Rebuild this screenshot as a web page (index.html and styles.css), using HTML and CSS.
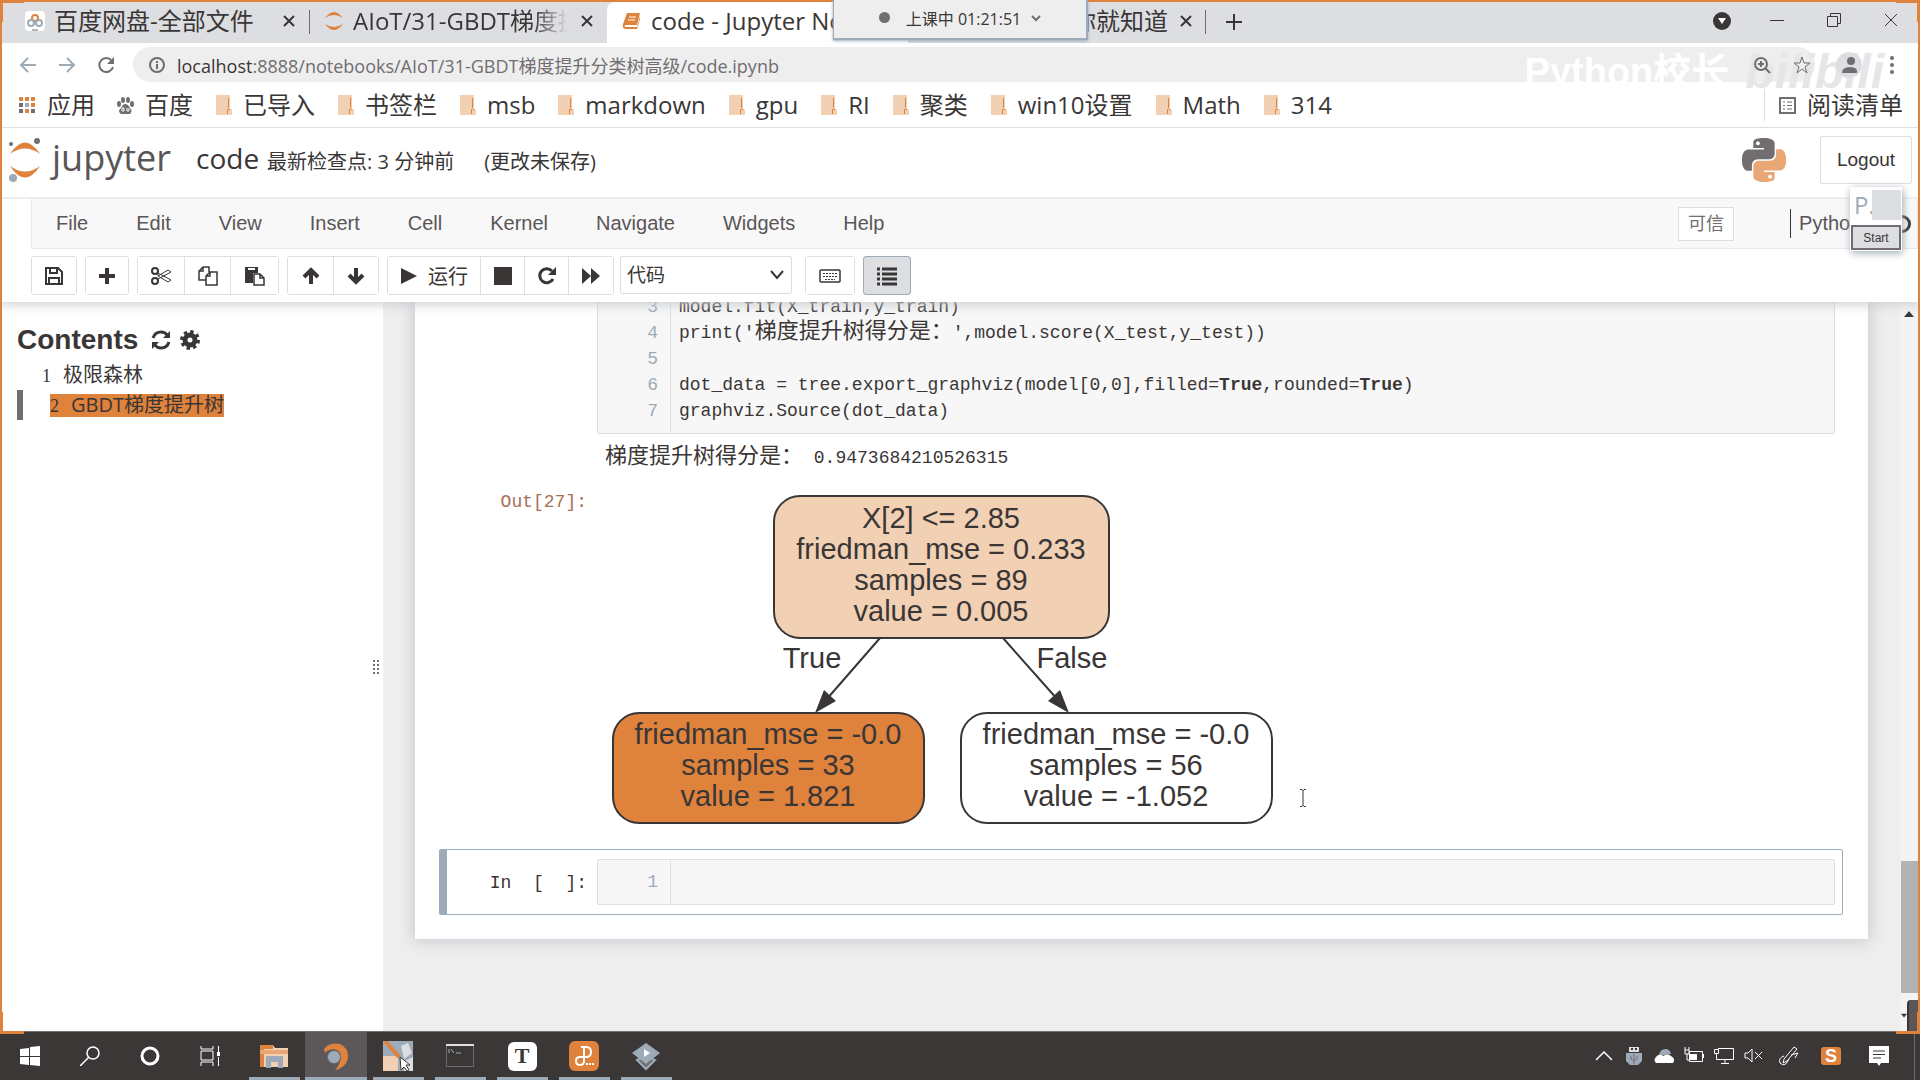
FILE: index.html
```html
<!DOCTYPE html>
<html lang="zh-CN">
<head>
<meta charset="utf-8">
<title>code - Jupyter Notebook</title>
<link rel="stylesheet" href="styles.css">
</head>
<body>
<svg class="defs" aria-hidden="true">
  <symbol id="folder" viewBox="0 0 17 20"><path d="M1 0h14v14l2 1v5H1z" fill="#f2d0b4"/><path d="M13.500 3v10M12.500 14v5M13.500 14.500h2" stroke="#de823c" fill="none"/></symbol>
  <symbol id="cross" viewBox="0 0 12 12"><path d="M1 1l10 10M11 1L1 11" stroke="#3a3636" stroke-width="2"/></symbol>
  <symbol id="jup" viewBox="0 0 20 20"><path d="M1 7Q10-5 19 7Q10 1 1 7zM1 13Q10 25 19 13Q10 19 1 13z" fill="#de823c"/></symbol>
</svg>

<div class="window">
  <header class="browser">
    <nav class="tabs" aria-label="标签页">
      <div class="tab">
        <svg class="i20" viewBox="0 0 20 20"><rect width="20" height="20" rx="4" fill="#fff"/><circle cx="10" cy="7" r="3" fill="none" stroke="#de823c" stroke-width="2"/><circle cx="6" cy="12" r="3" fill="none" stroke="#9dabb8" stroke-width="2"/><circle cx="14" cy="12" r="3" fill="none" stroke="#9dabb8" stroke-width="2"/><path d="M7 19h6" stroke="#716d71"/></svg>
        <span class="tab-title">百度网盘-全部文件</span>
        <button class="plain" aria-label="关闭"><svg class="i12"><use href="#cross"/></svg></button>
      </div>
      <div class="tab ruled">
        <svg class="i20"><use href="#jup"/></svg>
        <span class="tab-title fade">AIoT/31-GBDT梯度提升</span>
        <button class="plain" aria-label="关闭"><svg class="i12"><use href="#cross"/></svg></button>
      </div>
      <div class="tab active">
        <svg class="i20" viewBox="0 0 20 20"><path d="M5 2h13l-3 12H4q-2 0-1 2h12l3-11v3l-3 10H3q-3-1-2-5z" fill="#de823c"/><path d="M7 6h7M6 9h7" stroke="#fff"/></svg>
        <span class="tab-title">code - Jupyter Notebook</span>
      </div>
      <div class="tab last">
        <span class="i20"></span>
        <span class="tab-title">百度一下，你就知道</span>
        <button class="plain" aria-label="关闭"><svg class="i12"><use href="#cross"/></svg></button>
      </div>
      <button class="plain newtab" aria-label="新标签页"><svg class="i16" viewBox="0 0 16 16"><path d="M8 0v16M0 8h16" stroke="#3a3636" stroke-width="2"/></svg></button>
      <div class="winctl">
        <svg class="i20" viewBox="0 0 20 20"><circle cx="10" cy="11" r="9" fill="#3a3636"/><path d="M6 8h8l-4 6z" fill="#fff"/></svg>
        <button class="plain" aria-label="最小化"><svg class="i14" viewBox="0 0 14 14"><path d="M0 7.500h14" stroke="#3a3636"/></svg></button>
        <button class="plain" aria-label="还原"><svg class="i14" viewBox="0 0 14 14"><path d="M.5 3.500h10v10H.5zM3.500 3V.5h10v10H11" stroke="#3a3636" fill="none"/></svg></button>
        <button class="plain" aria-label="关闭窗口"><svg class="i14" viewBox="0 0 14 14"><path d="M1 1l12 12M13 1L1 13" stroke="#3a3636"/></svg></button>
      </div>
    </nav>

    <div class="address">
      <button class="plain" aria-label="后退"><svg class="i18" viewBox="0 0 18 18"><path d="M17 9H2M9 2L2 9l7 7" stroke="#9dabb8" stroke-width="2" fill="none"/></svg></button>
      <button class="plain" aria-label="前进"><svg class="i18" viewBox="0 0 18 18"><path d="M1 9h15M9 2l7 7-7 7" stroke="#9dabb8" stroke-width="2" fill="none"/></svg></button>
      <button class="plain" aria-label="刷新"><svg class="i18" viewBox="0 0 18 18"><path d="M15 5a7 7 0 1 0 1 6" stroke="#716d71" stroke-width="2" fill="none"/><path d="M17 1v7h-7z" fill="#716d71"/></svg></button>
      <div class="omnibox">
        <svg class="i18" viewBox="0 0 18 18"><circle cx="9" cy="9" r="7" stroke="#716d71" stroke-width="2" fill="none"/><path d="M9 8v5M9 5v2" stroke="#716d71" stroke-width="2"/></svg>
        <span class="url"><b>localhost</b>:8888/notebooks/AIoT/31-GBDT梯度提升分类树高级/code.ipynb</span>
        <svg class="i18" viewBox="0 0 18 18"><circle cx="8" cy="8" r="6" stroke="#716d71" stroke-width="2" fill="none"/><path d="M12 12l5 5M8 5v6M5 8h6" stroke="#716d71" stroke-width="2"/></svg>
        <svg class="i18 star" viewBox="0 0 18 18"><path d="M9 1l2 6h6l-5 4 2 6-5-4-5 4 2-6-5-4h6z" stroke="#716d71" fill="none"/></svg>
      </div>
      <svg class="i26" viewBox="0 0 26 26"><circle cx="13" cy="13" r="13" fill="#dddee2"/><circle cx="15" cy="9" r="4" fill="#716d71"/><path d="M6 21q0-6 8-6t7 6z" fill="#716d71"/></svg>
      <button class="plain kebab" aria-label="菜单"><svg class="i18" viewBox="0 0 18 18"><circle cx="9" cy="2" r="2" fill="#716d71"/><circle cx="9" cy="9" r="2" fill="#716d71"/><circle cx="9" cy="16" r="2" fill="#716d71"/></svg></button>
      <div class="watermark" aria-hidden="true"><span>Python校长</span><i>bilibili</i></div>
    </div>

    <nav class="bookmarks" aria-label="书签">
      <a href="#"><svg class="i17" viewBox="0 0 17 17"><path d="M0 0h4v4H0zM6 0h4v4H6zM12 0h4v4h-4zM12 6h4v4h-4zM6 12h4v4H6z" fill="#de823c"/><path d="M0 6h4v4H0zM0 12h4v4H0zM12 12h4v4h-4z" fill="#716d71"/><path d="M6 6h4v4H6z" fill="#9dabb8"/></svg>应用</a>
      <a href="#"><svg class="i17" viewBox="0 0 17 17"><g fill="#716d71"><ellipse cx="2" cy="7" rx="2" ry="3"/><ellipse cx="6" cy="3" rx="2" ry="3"/><ellipse cx="11" cy="3" rx="2" ry="3"/><ellipse cx="15" cy="7" rx="2" ry="3"/><path d="M8 7q3 0 5 4 3 3 0 6H4q-4-3 0-6 2-4 4-4z"/></g><path d="M7 11H5v3h2zM10 11v3h2v-3" stroke="#fff" fill="none"/></svg>百度</a>
      <a href="#"><svg class="i17 f"><use href="#folder"/></svg>已导入</a>
      <a href="#"><svg class="i17 f"><use href="#folder"/></svg>书签栏</a>
      <a href="#"><svg class="i17 f"><use href="#folder"/></svg>msb</a>
      <a href="#"><svg class="i17 f"><use href="#folder"/></svg>markdown</a>
      <a href="#"><svg class="i17 f"><use href="#folder"/></svg>gpu</a>
      <a href="#"><svg class="i17 f"><use href="#folder"/></svg>RI</a>
      <a href="#"><svg class="i17 f"><use href="#folder"/></svg>聚类</a>
      <a href="#"><svg class="i17 f"><use href="#folder"/></svg>win10设置</a>
      <a href="#"><svg class="i17 f"><use href="#folder"/></svg>Math</a>
      <a href="#"><svg class="i17 f"><use href="#folder"/></svg>314</a>
      <a href="#" class="reading"><svg class="i17" viewBox="0 0 17 17"><path d="M1 1h15v15H1z" fill="none" stroke="#716d71" stroke-width="2"/><path d="M4 5h2M8 5h5M4 8.500h2M8 8.500h5M4 12h2M8 12h5" stroke="#716d71"/></svg>阅读清单</a>
    </nav>
  </header>

  <section class="jhead">
    <a href="#" class="logo">
      <svg class="jlogo" viewBox="0 0 32 44"><path d="M1 16Q16-7 31 16Q16 5 1 16zM1 28Q16 51 31 28Q16 39 1 28z" fill="#de823c"/><circle cx="28" cy="3" r="3" fill="#716d71"/><circle cx="2" cy="6" r="2" fill="#716d71"/><circle cx="4" cy="40" r="4" fill="#9dabb8"/></svg>
      <span>jupyter</span>
    </a>
    <h1>code</h1>
    <span class="check">最新检查点: 3 分钟前</span>
    <span class="unsaved">(更改未保存)</span>
    <svg class="python" viewBox="0 0 24 24"><defs><path id="py" fill-rule="evenodd" d="M14.250.18l.9.2.73.26.59.3.45.32.34.34.25.34.16.33.1.3.04.26.02.2-.01.13V8.500l-.05.63-.13.55-.21.46-.26.38-.3.31-.33.25-.35.19-.35.14-.33.1-.3.07-.26.04-.21.02H8.770l-.69.05-.59.14-.5.22-.41.27-.33.32-.27.35-.2.36-.15.37-.1.35-.07.32-.04.27-.02.21v3.060H3.170l-.21-.03-.28-.07-.32-.12-.35-.18-.36-.26-.36-.36-.35-.46-.32-.59-.28-.73-.21-.88-.14-1.050-.05-1.230.06-1.220.16-1.040.24-.87.32-.71.36-.57.4-.44.42-.33.42-.24.4-.16.36-.1.32-.05.24-.01h.16l.06.01h8.160v-.83H6.180l-.01-2.750-.02-.37.05-.34.11-.31.17-.28.25-.26.31-.23.38-.2.44-.18.51-.15.58-.12.64-.1.71-.06.77-.04.84-.02 1.270.05zm-6.300 1.980l-.23.33-.08.41.08.41.23.34.33.22.41.09.41-.09.33-.22.23-.34.08-.41-.08-.41-.23-.33-.33-.22-.41-.09-.41.09z"/></defs><use href="#py" fill="#716d71"/><use href="#py" fill="#e8a775" transform="rotate(180 12 12)"/></svg>
    <button class="logout">Logout</button>
    <div class="startbox">
      <div class="starttop"><span>P.</span><span class="pad"></span></div>
      <button>Start</button>
    </div>
  </section>

  <nav class="menubar" aria-label="菜单栏">
    <a href="#">File</a><a href="#">Edit</a><a href="#">View</a><a href="#">Insert</a><a href="#">Cell</a><a href="#">Kernel</a><a href="#">Navigate</a><a href="#">Widgets</a><a href="#">Help</a>
    <span class="trusted">可信</span>
    <span class="kernel">Python 3 <span class="ring"></span></span>
  </nav>

  <div class="toolbar">
    <div class="group"><button class="w44" aria-label="保存"><svg class="i18" viewBox="0 0 18 18"><path d="M1 1h12l4 4v12H1zM5 1v5h7V1M4 17v-6h10v6" stroke="#3a3636" stroke-width="2" fill="none"/></svg></button></div>
    <div class="group"><button class="w42" aria-label="添加"><svg class="i16" viewBox="0 0 16 16"><path d="M8 0v16M0 8h16" stroke="#3a3636" stroke-width="4"/></svg></button></div>
    <div class="group">
      <button class="w46" aria-label="剪切"><svg class="i20" viewBox="0 0 20 20"><g fill="none" stroke="#3a3636"><circle cx="4" cy="5" r="3" stroke-width="2"/><circle cx="4" cy="15" r="3" stroke-width="2"/><path d="M7 7l13 7-3 2L7 10zM7 13l13-7-3-2-10 6"/></g></svg></button>
      <button class="w46" aria-label="复制"><svg class="i20" viewBox="0 0 20 20"><path d="M5 1h6v5M5 1L1 5v9h7M5 1v4H1M12 6h7v13H8v-9zM12 6v4H8" stroke="#3a3636" stroke-width="1.500" fill="none"/></svg></button>
      <button class="w48" aria-label="粘贴"><svg class="i20" viewBox="0 0 20 20"><path d="M0 1h13v6H8v10H0z" fill="#3a3636"/><path d="M3 3h7" stroke="#fff" stroke-width="2"/><path d="M9 8h6l4 4v7H9zM15 8v4h4" stroke="#3a3636" stroke-width="1.500" fill="#fff"/></svg></button>
    </div>
    <div class="group">
      <button class="w45" aria-label="上移"><svg class="i18" viewBox="0 0 18 18"><path d="M9 17V3M2 10l7-7 7 7" stroke="#3a3636" stroke-width="4" fill="none"/></svg></button>
      <button class="w45" aria-label="下移"><svg class="i18" viewBox="0 0 18 18"><path d="M9 1v14M2 8l7 7 7-7" stroke="#3a3636" stroke-width="4" fill="none"/></svg></button>
    </div>
    <div class="group">
      <button class="run"><svg class="i18" viewBox="0 0 18 18"><path d="M1 1l16 8-16 8z" fill="#3a3636"/></svg>运行</button>
      <button class="w44" aria-label="停止"><svg class="i18" viewBox="0 0 18 18"><path d="M0 0h18v18H0z" fill="#3a3636"/></svg></button>
      <button class="w44" aria-label="重启"><svg class="i18" viewBox="0 0 18 18"><path d="M14 4a7 7 0 1 0 1 8" stroke="#3a3636" stroke-width="3" fill="none"/><path d="M18 0v8h-8z" fill="#3a3636"/></svg></button>
      <button class="w45" aria-label="重启并运行"><svg class="i18" viewBox="0 0 18 18"><path d="M0 1l9 8-9 8zM9 1l9 8-9 8z" fill="#3a3636"/></svg></button>
    </div>
    <select class="celltype" aria-label="单元类型"><option>代码</option></select>
    <div class="group"><button class="w48" aria-label="键盘"><svg class="i22" viewBox="0 0 22 18"><rect x="1" y="3" width="20" height="12" rx="1" fill="none" stroke="#3a3636" stroke-width="1.500"/><path d="M4 6.500h15M4 9.500h15M6 12.500h10" stroke="#3a3636" stroke-dasharray="2 1"/></svg></button></div>
    <div class="group"><button class="w46 on" aria-label="目录"><svg class="i20" viewBox="0 0 20 20"><path d="M0 3h3M5 3h15M0 8h3M5 8h15M0 13h3M5 13h15M0 18h3M5 18h15" stroke="#3a3636" stroke-width="3"/></svg></button></div>
  </div>

  <main class="site">
    <aside class="toc">
      <h2>Contents
        <svg class="i20" viewBox="0 0 20 20"><path d="M2 8q2-6 8-6 4 0 6 3M18 12q-2 6-8 6-4 0-6-3" stroke="#3a3636" stroke-width="3" fill="none"/><path d="M19 1v7h-7zM1 19v-7h7z" fill="#3a3636"/></svg>
        <svg class="i20" viewBox="0 0 20 20"><circle cx="10" cy="10" r="5" fill="none" stroke="#3a3636" stroke-width="5"/><circle cx="10" cy="10" r="8" fill="none" stroke="#3a3636" stroke-width="4" stroke-dasharray="3.200 3.080"/></svg>
      </h2>
      <ul>
        <li><a href="#"><small>1</small>极限森林</a></li>
        <li class="cur"><a href="#"><small>2</small>GBDT梯度提升树</a></li>
      </ul>
      <span class="grip"></span>
    </aside>

    <div class="scroller">
      <div class="notebook">
        <div class="cell">
          <div class="prompt"></div>
          <div class="input code">
            <ol class="gutter"><li>3</li><li>4</li><li>5</li><li>6</li><li>7</li></ol>
<pre>model.fit(X_train,y_train)
print('<span class="zh">梯度提升树得分是：</span>',model.score(X_test,y_test))

dot_data = tree.export_graphviz(model[0,0],filled=<b>True</b>,rounded=<b>True</b>)
graphviz.Source(dot_data)</pre>
          </div>
        </div>
        <div class="cell">
          <div class="prompt"></div>
          <pre class="stdout"><span class="zh">梯度提升树得分是：</span> 0.9473684210526315</pre>
        </div>
        <div class="cell result">
          <div class="prompt out">Out[27]:</div>
          <svg class="tree" width="668" height="332" viewBox="610 494 668 332">
            <g stroke="#3a3636" stroke-width="2">
              <rect x="774" y="496" width="335" height="142" rx="26" fill="#f2d0b4"/>
              <rect x="613" y="713" width="311" height="110" rx="26" fill="#de823c"/>
              <rect x="961" y="713" width="311" height="110" rx="26" fill="#fff"/>
              <path d="M880 638L826 700M1003 638l55 62"/>
            </g>
            <path d="M815 713l9-23 12 11zM1069 713l-21-12 12-11z" fill="#3a3636"/>
            <g text-anchor="middle">
              <text x="941" y="528">X[2] &lt;= 2.85</text><text x="941" y="559">friedman_mse = 0.233</text><text x="941" y="590">samples = 89</text><text x="941" y="621">value = 0.005</text>
              <text x="812" y="668">True</text><text x="1072" y="668">False</text>
              <text x="768" y="744">friedman_mse = -0.0</text><text x="768" y="775">samples = 33</text><text x="768" y="806">value = 1.821</text>
              <text x="1116" y="744">friedman_mse = -0.0</text><text x="1116" y="775">samples = 56</text><text x="1116" y="806">value = -1.052</text>
            </g>
          </svg>
          <svg class="ibeam" viewBox="0 0 8 18"><path d="M1 .5h2l1 1 1-1h2M4 1v16M1 17.500h2l1-1 1 1h2" stroke="#3a3636" fill="none"/></svg>
        </div>
        <div class="cell selected">
          <div class="prompt">In&nbsp; [&nbsp; ]:</div>
          <div class="input"><ol class="gutter"><li>1</li></ol><pre></pre></div>
        </div>
      </div>
      <div class="scrollbar">
        <svg class="arrow" viewBox="0 0 10 6"><path d="M5 0l5 6H0z" fill="#3a3636"/></svg>
        <span class="thumb"></span>
        <div class="foot"><svg class="down" viewBox="0 0 8 5"><path d="M4 5l4-5H0z" fill="#3a3636"/></svg><span class="sidewidget"></span></div>
      </div>
    </div>
  </main>

  <span class="corner tl"></span><span class="corner tr"></span><span class="corner bl"></span><span class="corner br"></span>
  <div class="classbar"><span class="dot"></span>上课中 01:21:51<svg class="chev" viewBox="0 0 10 10"><path d="M1 3l4 4 4-4" stroke="#716d71" stroke-width="2" fill="none"/></svg></div>
</div>

<footer class="taskbar">
  <button class="sys" aria-label="开始"><svg class="i20" viewBox="0 0 20 20"><path d="M0 3l9-1v8H0zM10 1l10-1v10H10zM0 11h9v8l-9-1zM10 11h10v9l-10-1z" fill="#fff"/></svg></button>
  <button class="sys" aria-label="搜索"><svg class="i20" viewBox="0 0 20 20"><circle cx="13" cy="7" r="6" stroke="#fff" stroke-width="1.500" fill="none"/><path d="M9 11l-9 9" stroke="#fff" stroke-width="1.500"/></svg></button>
  <button class="sys" aria-label="Cortana"><svg class="i20" viewBox="0 0 20 20"><circle cx="10" cy="10" r="8" stroke="#fff" stroke-width="3" fill="none"/></svg></button>
  <button class="sys" aria-label="任务视图"><svg class="i20" viewBox="0 0 20 20"><path d="M1 5h12v9H1zM1 0v3h12V0M1 20v-4h12v4M18.500 0v6M18.500 11v9" stroke="#fff" fill="none"/><path d="M17 6h3v4h-3z" fill="#fff"/></svg></button>
  <div class="apps">
    <button aria-label="文件资源管理器"><svg class="i30" viewBox="0 0 30 30"><path d="M1 4h13l2 3h13v19H1z" fill="#f2d0b4"/><path d="M1 4h13v4H1zM1 8h4v18H1z" fill="#de823c"/><path d="M1 9h28v4H1z" fill="#e8a775"/><path d="M7 27V15h17v12h-5v-6h-7v6z" fill="#9dabb8"/></svg></button>
    <button class="now" aria-label="浏览器"><svg class="i30" viewBox="0 0 30 30"><path d="M3 8Q9 1 19 3q9 4 8 14-2 10-13 12 5-5 6-13 0-7-8-8-6 1-8 4z" fill="#de823c"/><circle cx="13" cy="16" r="7" fill="#716d71"/><circle cx="13" cy="16" r="6" fill="#9dabb8"/></svg></button>
    <button aria-label="画图"><svg class="i30" viewBox="0 0 30 30"><path d="M0 0h30v30H0z" fill="#9dabb8"/><path d="M0 15h15v15H0z" fill="#f2d0b4"/><path d="M18 5l7-3 4 10-8 6zM22 20l8-4v14h-9z" fill="#dddee2"/><path d="M2 0l14 16" stroke="#de823c" stroke-width="4"/><path d="M17 16l1 13 3-3 3 4 2-1-3-5h4z" fill="#fff" stroke="#3a3636"/></svg></button>
    <button aria-label="终端"><svg class="i30" viewBox="0 0 30 30"><path d="M1.500 4.500h27v21h-27z" fill="none" stroke="#716d71"/><path d="M1 4h28" stroke="#dddee2" stroke-width="2"/><path d="M4 8v4M6 8l3 4M11 12h5" stroke="#9dabb8"/></svg></button>
    <button aria-label="Typora"><span class="badge typora">T</span></button>
    <button aria-label="PDF"><svg class="i30" viewBox="0 0 30 30"><rect width="30" height="30" rx="6" fill="#de823c"/><path d="M12 6h5q5 0 5 5t-5 5h-6q-4 0-4 4t4 4q4 0 4-4V6" stroke="#fff" stroke-width="2" fill="none"/><path d="M17 23h8" stroke="#fff" stroke-width="2" stroke-dasharray="2 1"/></svg></button>
    <button aria-label="播放器"><svg class="i30" viewBox="0 0 30 30"><path d="M6 19l9-4 9 4-9 9z" fill="#716d71" stroke="#9dabb8" stroke-width="2"/><path d="M15 2l14 10-14 11L1 12z" fill="#9dabb8"/><path d="M13 8l6 4-6 4z" fill="#fff"/></svg></button>
  </div>
  <div class="tray">
    <svg class="i20" viewBox="0 0 20 20"><path d="M2 14l8-8 8 8" stroke="#fff" stroke-width="1.500" fill="none"/></svg>
    <svg class="i20" viewBox="0 0 20 20"><path d="M5 1h10v5H5z" fill="#dddee2"/><path d="M7 3h2M11 3h2" stroke="#3a3636" stroke-width="2"/><path d="M2 7h16v8l-4 4H6l-4-4z" fill="#9dabb8"/><path d="M10 8v10M7 10v3l3 2 3-2v-3" stroke="#716d71" fill="none"/></svg>
    <svg class="i20" viewBox="0 0 20 20"><path d="M5 10q0-6 6-7 5 0 6 5z" fill="#9dabb8"/><path d="M2 17q-3-3 0-6 3-4 7-1 5-3 8 0 5 3 2 7z" fill="#fff"/></svg>
    <svg class="i20" viewBox="0 0 20 20"><path d="M5.500 5.500h13v10h-13zM19.500 8v4M1 4h4v4H1zM3 8v6h3M1 1v3M5 1v3" stroke="#fff" fill="none"/><path d="M6 8h7v6H6z" fill="#fff"/></svg>
    <svg class="i20" viewBox="0 0 20 20"><path d="M4 2.500h15.500v11H2.500V8M11 14v3M7 17.500h8M.5 3.500h4v4h-4z" stroke="#fff" fill="none"/></svg>
    <svg class="i20" viewBox="0 0 20 20"><path d="M1 7h3l4-4v13l-4-4H1zM11 6l7 7M18 6l-7 7" stroke="#fff" fill="none"/></svg>
    <svg class="i20 pen" viewBox="0 0 20 20"><path d="M15 1l3 2L8 15l-4 2 1-4zM5 10q-6 2-4 7 5 5 9-4M12 9l7-2-3 5" stroke="#fff" fill="none"/></svg>
    <span class="badge sogou">S</span>
    <svg class="i20 note" viewBox="0 0 20 20"><path d="M0 0h20v17h-8l-2 3-2-3H0z" fill="#fff"/><path d="M4 5h12M4 8.500h12M4 12h8" stroke="#3a3636"/></svg>
    <span class="desk"></span>
  </div>
</footer>
</body>
</html>
```
FILE: styles.css
```css
* { box-sizing: border-box; }
body {
  margin: 0;
  height: 100vh;
  display: flex;
  flex-direction: column;
  background: #fff;
  color: #3a3636;
  font-family: "Open Sans", "Noto Sans CJK SC", sans-serif;
}
button, select { font-family: inherit; color: inherit; }
a { color: inherit; text-decoration: none; }
ul, ol, pre, h1, h2 { margin: 0; padding: 0; list-style: none; }
svg { flex: none; display: block; }
.defs { display: none; }
.plain { border: 0; padding: 0; background: none; display: flex; }
.i12 { width: 12px; height: 12px; }
.i14 { width: 14px; height: 14px; }
.i16 { width: 16px; height: 16px; }
.i17 { width: 17px; height: 17px; }
.i18 { width: 18px; height: 18px; }
.i20 { width: 20px; height: 20px; flex: none; }
.i22 { width: 22px; height: 18px; }
.i26 { width: 26px; height: 26px; }
.i30 { width: 30px; height: 30px; }

.window {
  position: relative;
  flex: 1;
  min-height: 0;
  display: flex;
  flex-direction: column;
  border: 2px solid #de823c;
  border-bottom: 0;
}
.corner { position: absolute; z-index: 2; width: 24px; height: 22px; border: 0 solid #de823c; }
.tl { top: -2px; left: -2px; border-width: 3px 0 0 3px; }
.tr { top: -2px; right: -2px; border-width: 3px 3px 0 0; }
.bl { bottom: -3px; left: -2px; border-width: 0 0 3px 3px; }
.br { bottom: -3px; right: -2px; border-width: 0 3px 3px 0; }

/* Browser chrome */
.tabs { display: flex; height: 41px; background: #dddee2; font-size: 24px; line-height: 32px; }
.tab {
  width: 298px;
  padding: 0 14px 4px 15px;
  display: flex;
  align-items: center;
  gap: 9px;
}
.tab:first-child { width: 307px; padding-left: 23px; }
.tab-title { flex: 1; overflow: hidden; white-space: nowrap; }
.fade { -webkit-mask-image: linear-gradient(90deg, #000 82%, transparent 98%); mask-image: linear-gradient(90deg, #000 82%, transparent 98%); }
.ruled { background: linear-gradient(#716d71, #716d71) 0 8px / 1px 24px no-repeat; }
.tab.active { width: 301px; background: #fff; border-radius: 8px 8px 0 0; }
.tab.last { background: linear-gradient(#716d71, #716d71) 100% 8px / 1px 24px no-repeat; }
.newtab { align-self: center; margin: 0 0 2px 20px; }
.winctl { margin-left: auto; padding: 0 20px 6px 0; display: flex; align-items: center; gap: 43px; }
.winctl svg:first-child.i20 { margin-right: -5px; }

.address { position: relative; isolation: isolate; height: 45px; padding: 0 17px 2px 17px; display: flex; align-items: center; gap: 21px; }
.address svg { position: relative; z-index: 1; }
.omnibox {
  flex: 1;
  height: 35px;
  margin-left: -3px;
  padding: 0 4px 0 15px;
  border-radius: 18px;
  background: #eee;
  display: flex;
  align-items: center;
  gap: 11px;
  font-size: 18px;
  color: #716d71;
}
.url { flex: 1; white-space: nowrap; }
.url b { font-weight: 400; color: #3a3636; }
.star { margin-left: 11px; }
.watermark {
  position: absolute;
  z-index: 0;
  right: 34px;
  top: 1px;
  height: 56px;
  display: flex;
  align-items: center;
  gap: 16px;
  color: #fff;
  font: bold 38px/56px "Liberation Sans", "Noto Sans CJK SC", sans-serif;
}
.watermark i { color: #e6e6e8; font-size: 48px; }

.bookmarks {
  height: 40px;
  padding: 0 15px 5px 17px;
  border-bottom: 1px solid #dddee2;
  display: flex;
  align-items: center;
  gap: 22px;
  font-size: 24px;
  line-height: 32px;
  white-space: nowrap;
}
.bookmarks a { display: flex; align-items: center; gap: 11px; }
.bookmarks .f { height: 20px; }
.bookmarks .reading { margin-left: auto; padding-left: 14px; border-left: 1px solid #dddee2; }

/* Notebook header */
.jhead {
  position: relative;
  height: 71px;
  padding: 0 6px 5px 7px;
  border-bottom: 2px solid #eee;
  display: flex;
  align-items: center;
  font-size: 20px;
}
.logo { display: flex; align-items: center; gap: 11px; font-size: 36px; line-height: 40px; color: #5a5557; }
.logo span { padding-bottom: 4px; }
.jlogo { width: 32px; height: 44px; }
h1 { margin: 0 8px 4px 25px; font-weight: 400; font-size: 28px; line-height: 40px; }
.unsaved { margin-left: 30px; }
.python { width: 44px; height: 44px; margin-left: auto; }
.logout {
  width: 92px;
  height: 48px;
  margin-left: 34px;
  background: #fff;
  border: 1px solid #dddee2;
  border-radius: 2px;
  font: 19px "Liberation Sans", sans-serif;
}
.startbox {
  position: absolute;
  z-index: 2;
  right: 16px;
  top: 59px;
  width: 52px;
  padding: 2px 1px 1px;
  background: #fff;
  box-shadow: 1px 2px 8px #9dabb8;
}
.starttop { height: 36px; padding: 1px 0 5px 3px; display: flex; justify-content: space-between; color: #9dabb8; font-size: 24px; line-height: 30px; }
.starttop span:first-child { width: 16px; }
.pad { width: 29px; background: #dddee2; }
.startbox button { width: 50px; height: 25px; padding: 0; display: block; border: 2px solid #716d71; background: #dddee2; font: 12px "Liberation Sans", sans-serif; }

.menubar {
  height: 50px;
  margin-left: 29px;
  padding-left: 24px;
  border: 1px solid #e7e7e7;
  border-top: 0;
  background: #f8f8f8;
  display: flex;
  align-items: center;
  gap: 48px;
  color: #5a5557;
  font: 20px "Liberation Sans", "Noto Sans CJK SC", sans-serif;
}
.trusted { margin-left: auto; width: 56px; height: 34px; border: 1px solid #dddee2; background: #fff; font-size: 18px; line-height: 32px; text-align: center; color: #716d71; }
.kernel { margin: 0 6px 0 8px; padding-left: 8px; border-left: 1px solid #3a3636; line-height: 29px; display: flex; align-items: center; gap: 15px; }
.ring { width: 18px; height: 18px; border: 3px solid #3a3636; border-radius: 50%; }

.toolbar { height: 53px; padding: 7px 0 0 29px; display: flex; gap: 8px; align-items: flex-start; }
.group { display: flex; height: 39px; border: 1px solid #dddee2; border-radius: 3px; }
.group button {
  border: 0;
  padding: 0;
  background: #fff;
  display: flex;
  align-items: center;
  justify-content: center;
  gap: 10px;
  font-size: 20px;
}
.group button + button { border-left: 1px solid #dddee2; }
.w42 { width: 42px; }
.w44 { width: 44px; }
.w45 { width: 45px; }
.w46 { width: 46px; }
.w48 { width: 48px; }
.run { width: 92px; }
.group .on { background: #dddee2; box-shadow: 0 0 0 1px #9dabb8; border-radius: 3px; }
.celltype {
  width: 172px;
  height: 38px;
  margin: 0 5px 0 -2px;
  padding: 0 6px;
  border: 1px solid #dddee2;
  border-radius: 2px;
  font-size: 19px;
  appearance: none;
  background: #fff url("data:image/svg+xml,%3Csvg xmlns='http://www.w3.org/2000/svg' width='14' height='10'%3E%3Cpath d='M1 1l6 7 6-7' fill='none' stroke='%233a3636' stroke-width='2'/%3E%3C/svg%3E") no-repeat right 7px center;
}

/* Sidebar and notebook */
.site { flex: 1; min-height: 0; display: flex; position: relative; overflow: hidden; }
.site::before { content: ""; position: absolute; z-index: 1; inset: -10px 0 auto; height: 10px; box-shadow: 0 0 12px 2px #c9cad0; }
.toc { position: relative; width: 381px; padding: 19px 0 0 15px; background: #fff; }
h2 { margin-bottom: 1px; display: flex; align-items: center; gap: 9px; font: bold 28px/38px "Liberation Sans", sans-serif; }
h2 svg:first-child { margin-left: 4px; }
.toc li { height: 30px; padding-left: 25px; display: flex; align-items: center; font-size: 20px; line-height: 22px; }
.toc .cur { padding-left: 27px; border-left: 6px solid #716d71; }
.cur a { background: #de823c; }
.toc small { display: inline-block; width: 21px; font: 18px "Liberation Serif", serif; }
.grip { position: absolute; right: 4px; top: calc(50% - 7px); width: 6px; height: 14px; border: dotted #716d71; border-width: 0 2px; }

.scroller { flex: 1; min-width: 0; display: flex; align-items: flex-end; padding-left: 32px; background: #eee; }
.notebook { flex: 1; min-width: 0; margin-bottom: 92px; padding: 0 25px 24px 24px; background: #fff; box-shadow: 0 0 14px 2px #c9cad0; font: 18px/26px "Liberation Mono", "Noto Sans CJK SC", monospace; }
.cell { display: flex; border: 1px solid transparent; border-width: 0 1px; padding-right: 7px; }
.prompt { width: 157px; padding: 9px 10px 0 0; flex: none; text-align: right; white-space: nowrap; }
.input { flex: 1; display: flex; border: 1px solid #dddee2; border-radius: 2px; background: #f7f7f7; }
.gutter { width: 73px; padding: 9px 12px 9px 0; border-right: 1px solid #dddee2; text-align: right; color: #9dabb8; }
pre { font: inherit; }
.input pre { padding: 9px 8px; }
.zh { font-size: 22px; line-height: 20px; }
.stdout { padding: 11px 8px 10px; }
.prompt.out { padding-top: 8px; color: #a86f55; }
.tree { margin: 13px 0 0 13px; font: 29px "Liberation Sans", sans-serif; fill: #3a3636; }
.ibeam { width: 8px; height: 18px; margin: 308px 0 0 21px; }
.selected { margin-top: 23px; padding: 9px 7px 9px 0; border: 1px solid #9dabb8; border-left-width: 8px; border-radius: 2px; }
.selected .prompt { width: 150px; padding-top: 11px; }

.scrollbar { align-self: stretch; width: 18px; margin-left: 32px; display: flex; flex-direction: column; align-items: flex-end; background: #f3f3f3; }
.arrow { width: 10px; height: 6px; margin: 9px 4px 0; }
.thumb { width: 17px; height: 132px; margin-top: auto; background: #b3b3b6; }
.foot { display: flex; align-items: center; margin-top: 7px; }
.down { width: 6px; height: 5px; }
.sidewidget { width: 11px; height: 31px; background: #5a5557; border-left: 2px solid #3a3636; border-radius: 4px 0 0 0; }

.classbar {
  position: absolute;
  z-index: 3;
  left: 831px;
  top: -2px;
  width: 255px;
  height: 40px;
  padding: 0 14px 3px 0;
  border: solid #9dabb8;
  border-width: 0 2px 2px 1px;
  background: #eee;
  box-shadow: 0 1px 3px #9dabb8;
  display: flex;
  align-items: center;
  justify-content: center;
  gap: 16px;
  font-size: 16px;
}
.classbar { padding-right: 0; }
.dot { width: 11px; height: 11px; border-radius: 50%; background: #716d71; }
.chev { width: 10px; height: 10px; margin-left: -6px; }

/* Taskbar */
.taskbar { height: 49px; flex: none; display: flex; background: #3b3737; border-top: 1px solid #716d71; color: #fff; }
.taskbar button { border: 0; padding: 0; background: none; display: flex; align-items: center; justify-content: center; }
.taskbar .sys { width: 60px; }
.apps { display: flex; margin-left: 3px; }
.taskbar .apps button { width: 62px; background: linear-gradient(#9dabb8, #9dabb8) center bottom / 51px 3px no-repeat; }
.taskbar .apps .now { background-color: #5c5759; background-size: 62px 3px; }
.badge { display: flex; align-items: center; justify-content: center; font-weight: bold; }
.typora { width: 29px; height: 29px; border-radius: 6px; background: #fff; color: #3a3636; font: bold 22px "Liberation Serif", serif; }
.sogou { width: 20px; height: 18px; margin-left: 12px; border-radius: 3px; background: #de823c; color: #fff; font: bold 18px "Liberation Sans", sans-serif; }
.tray { margin-left: auto; display: flex; align-items: center; gap: 10px; }
.pen { margin-left: 5px; }
.note { margin-left: 18px; }
.desk { align-self: stretch; width: 6px; margin-left: 15px; border-left: 1px solid #716d71; }
```
